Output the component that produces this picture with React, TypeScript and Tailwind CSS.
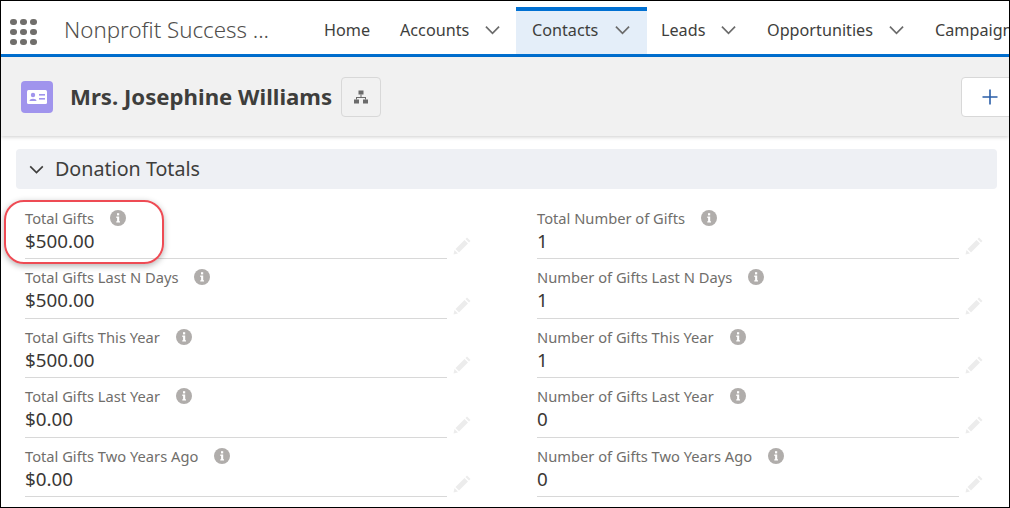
function Chev({ className, color = "#6b6b6b" }: { className: string; color?: string }) {
  return (
    <svg viewBox="0 0 16 10" className={className} fill="none" stroke={color} strokeWidth="1.8">
      <path d="M1 1.5 L8 8.5 L15 1.5" />
    </svg>
  );
}
function Info() {
  return (
    <svg viewBox="0 0 16 16" className="w-4 h-4 shrink-0">
      <circle cx="8" cy="8" r="8" fill="#b0adab" />
      <rect x="7" y="3.2" width="2.2" height="2.2" fill="#fff" />
      <path d="M6.3 6.6H9.2V11.3H10V12.6H6.3V11.3H7.1V7.9H6.3Z" fill="#fff" />
    </svg>
  );
}
function Pencil() {
  return (
    <svg viewBox="0 0 18 18" className="w-[18px] h-[18px] shrink-0">
      <path d="M0.5 17.5 L1.5 13 L5 16.5 Z M2.5 12 L11.5 3 L15 6.5 L6 15.5 Z M12.5 2 L14 0.5 L17.5 4 L16 5.5 Z" fill="#ececec" />
    </svg>
  );
}
function Field({ label, value }: { label: string; value: string }) {
  return (
    <div className="flex items-end h-[59.4px]">
      <div className="w-[422px] h-full border-b border-[#d8d8d8] flex flex-col pt-[8px]">
        <div className="flex items-center gap-[16px] h-[20px] text-[14.7px] text-[#706e6b]">
          <span>{label}</span>
          <Info />
        </div>
        <div className="text-[18.8px] leading-[26px] text-[#3a3836]">{value}</div>
      </div>
      <div className="ml-[6px] mb-[4px]"><Pencil /></div>
    </div>
  );
}
const left = [
  ["Total Gifts", "$500.00"],
  ["Total Gifts Last N Days", "$500.00"],
  ["Total Gifts This Year", "$500.00"],
  ["Total Gifts Last Year", "$0.00"],
  ["Total Gifts Two Years Ago", "$0.00"],
];
const right = [
  ["Total Number of Gifts", "1"],
  ["Number of Gifts Last N Days", "1"],
  ["Number of Gifts This Year", "1"],
  ["Number of Gifts Last Year", "0"],
  ["Number of Gifts Two Years Ago", "0"],
];
const chev = "w-[15px] h-[10px] shrink-0";
export default function App() {
  return (
    <div className="relative w-[1010px] h-[508px] overflow-hidden bg-white border border-black font-['Noto_Sans',sans-serif] flex flex-col">
      <nav className="h-[56px] shrink-0 border-b-[3px] border-[#0070d2] flex items-end overflow-hidden">
        <div className="w-[63px] h-full flex items-center pl-[9px] pt-[9px] shrink-0">
          <div className="grid grid-cols-3 gap-[3.5px]">
            {Array.from({ length: 9 }).map((_, i) => (
              <span key={i} className="w-[6.5px] h-[6.5px] rounded-full bg-[#706e6b]" />
            ))}
          </div>
        </div>
        <div className="w-[260px] h-full flex items-center pt-[5px] shrink-0 text-[22.3px] font-light text-[#514f4d] whitespace-nowrap">Nonprofit Success ...</div>
        <div className="h-full flex items-end text-[16.2px] text-[#3e3e3c] whitespace-nowrap">
          <span className="w-[76px] h-[47px] pb-px flex items-center">Home</span>
          <span className="w-[116px] h-[47px] pb-px flex items-center gap-[16px]">Accounts<Chev className={chev} /></span>
          <span className="w-[131px] h-[47px] pb-[5px] bg-[#e4eef9] border-t-[4px] border-[#0070d2] flex items-center pl-[16px] gap-[17px]">Contacts<Chev className={chev} /></span>
          <span className="w-[106px] h-[47px] pb-px flex items-center pl-[14px] gap-[16px]">Leads<Chev className={chev} /></span>
          <span className="w-[168px] h-[47px] pb-px flex items-center pl-[14px] gap-[16px]">Opportunities<Chev className={chev} /></span>
          <span className="h-[47px] pb-px flex items-center pl-[14px]">Campaigns</span>
        </div>
      </nav>
      <header className="h-[79px] shrink-0 bg-[#f1f1f1] shadow-[0_1px_4px_rgba(0,0,0,0.2)] flex items-center pl-[20px] relative">
        <div className="w-8 h-8 rounded-[4px] bg-[#a094ed] flex items-center justify-center">
          <svg viewBox="0 0 20 14" className="w-5 h-[14px]">
            <rect width="20" height="14" rx="1.5" fill="#fff" />
            <circle cx="6" cy="5" r="2.2" fill="#a094ed" />
            <path d="M2.5 11 C2.5 8 9.5 8 9.5 11Z" fill="#a094ed" />
            <rect x="12" y="4" width="6" height="1.6" fill="#a094ed" />
            <rect x="12" y="8" width="6" height="1.6" fill="#a094ed" />
          </svg>
        </div>
        <h1 className="ml-[17px] w-[260px] text-[22.2px] font-bold text-[#3e3e3c] whitespace-nowrap">Mrs. Josephine Williams</h1>
        <div className="ml-[11px] w-10 h-10 rounded-[4px] border border-[#d8d8d8] flex items-center justify-center">
          <svg viewBox="0 0 16 16" className="w-4 h-4" fill="#6b6b6b">
            <rect x="5.5" y="1.5" width="5" height="4" />
            <rect x="1" y="10.5" width="5" height="4" />
            <rect x="10" y="10.5" width="5" height="4" />
            <path d="M7.5 5.5h1V8H13v2.5h-1V9H4v1.5H3V8h4.5Z" />
          </svg>
        </div>
        <div className="absolute left-[960px] top-[20px] w-[60px] h-10 rounded-[4px] border border-[#d8d8d8] bg-white flex pl-[20px] items-center">
          <svg viewBox="0 0 16 16" className="w-4 h-4" stroke="#2a5ea8" strokeWidth="1.6"><path d="M8 0.5V15.5M0.5 8H15.5" /></svg>
        </div>
      </header>
      <section className="mt-[13px] ml-[15px] mr-[12px] h-10 shrink-0 rounded-[4px] bg-[#eef0f4] flex items-center pl-[13px] gap-[11px] text-[19.7px] text-[#3e3e3c]">
        <Chev className="w-[15px] h-[9px]" color="#3e3e3c" />
        <span>Donation Totals</span>
      </section>
      <div className="mt-[11px] flex pl-[24px] gap-[66px]">
        <div>{left.map(([l, v]) => <Field key={l} label={l} value={v} />)}</div>
        <div>{right.map(([l, v]) => <Field key={l} label={l} value={v} />)}</div>
      </div>
      <div className="absolute left-[3px] top-[199px] w-[160px] h-[64px] rounded-[20px] border-2 border-[#ee4b54] shadow-[0_2px_6px_rgba(0,0,0,0.3)]" />
    </div>
  );
}
